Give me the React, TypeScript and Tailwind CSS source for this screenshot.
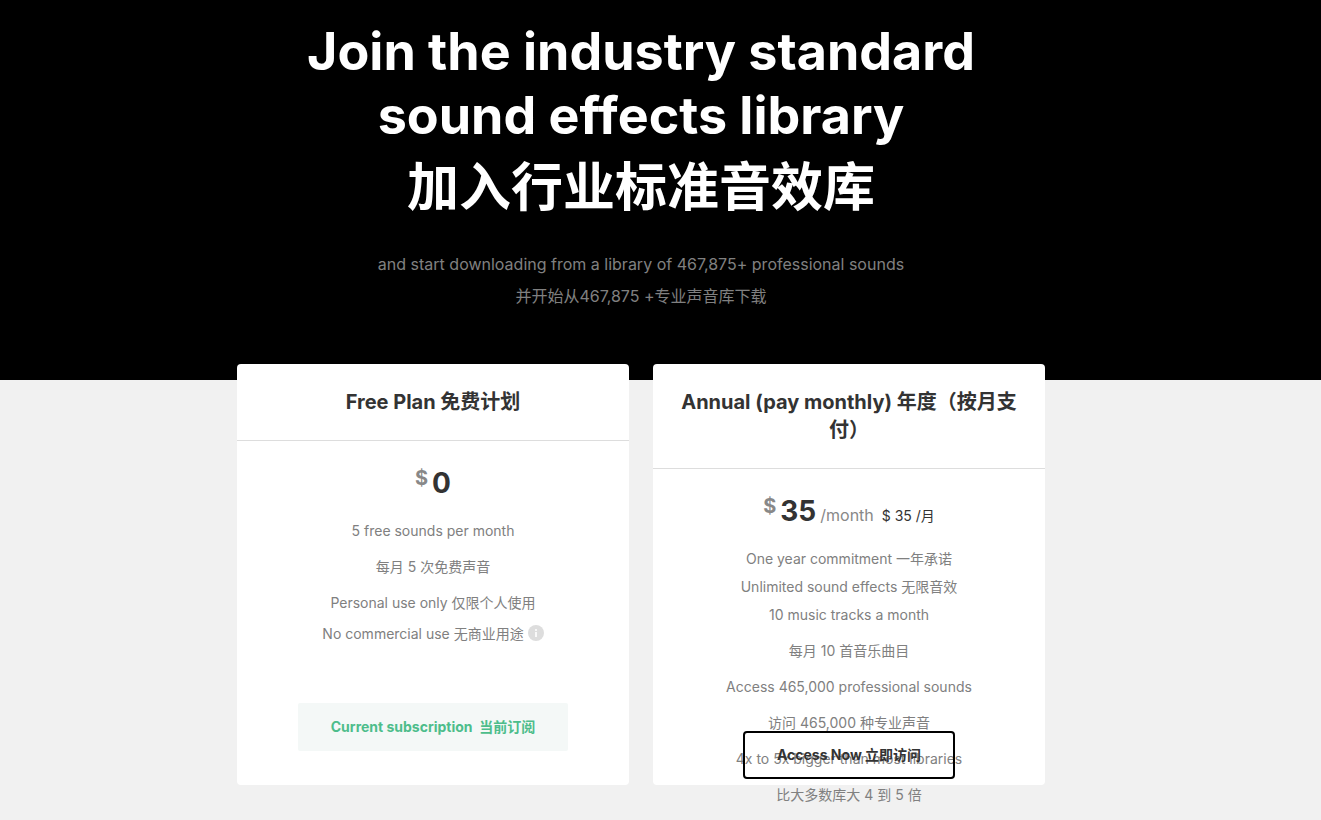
import type { ReactNode } from 'react'

type Plan = {
  id: string
  title: string
  price: string
  period?: string
  periodZh?: string
  features: { text: string; spaced?: boolean; info?: boolean }[]
  action: ReactNode
}

const plans: Plan[] = [
  {
    id: 'free',
    title: 'Free Plan 免费计划',
    price: '0',
    features: [
      { text: '5 free sounds per month' },
      { text: '每月 5 次免费声音', spaced: true },
      { text: 'Personal use only 仅限个人使用' },
      { text: 'No commercial use 无商业用途', info: true },
    ],
    action: (
      <div className="absolute inset-x-0 bottom-[34px] flex justify-center">
        <button type="button" className="h-12 w-[270px] rounded-[2px] bg-[#f4f8f7] text-sm font-bold text-[#4dbd8b]">
          Current subscription&nbsp; 当前订阅
        </button>
      </div>
    ),
  },
  {
    id: 'annual',
    title: 'Annual (pay monthly) 年度（按月支付）',
    price: '35',
    period: '/month',
    periodZh: '$ 35 /月',
    features: [
      { text: 'One year commitment 一年承诺' },
      { text: 'Unlimited sound effects 无限音效' },
      { text: '10 music tracks a month' },
      { text: '每月 10 首音乐曲目', spaced: true },
      { text: 'Access 465,000 professional sounds' },
      { text: '访问 465,000 种专业声音', spaced: true },
      { text: '4x to 5x bigger than most libraries' },
      { text: '比大多数库大 4 到 5 倍', spaced: true },
    ],
    action: (
      <div className="absolute inset-x-0 bottom-1.5 flex justify-center">
        <button type="button" className="h-12 w-[212px] rounded border-2 border-black text-sm font-bold text-[#333]">
          Access Now 立即访问
        </button>
      </div>
    ),
  },
]

function InfoIcon() {
  return (
    <svg viewBox="0 0 16 16" className="mb-1 inline-block h-4 w-4" aria-hidden="true">
      <circle cx="8" cy="8" r="8" fill="#ddd" />
      <circle cx="8" cy="5" r="1" fill="#fff" />
      <rect x="7.2" y="7" width="1.6" height="5" fill="#fff" />
    </svg>
  )
}

function PlanCard({ plan }: { plan: Plan }) {
  return (
    <article className="relative h-[421px] min-w-0 flex-1 rounded bg-white text-center">
      <h2 className="border-b border-[#ddd] p-6 text-xl leading-7 font-bold text-[#333]">{plan.title}</h2>
      <p className="mt-6 flex h-9 items-baseline justify-center gap-1 text-[#333]">
        <span className="relative -top-2 text-xl leading-9 font-bold text-[#888]">$</span>
        <span className="text-[28px] leading-9 font-bold">{plan.price}</span>
        {plan.period && <span className="text-base leading-9 text-[#888]">{plan.period}</span>}
        {plan.periodZh && <span className="ml-1 text-sm leading-9">{plan.periodZh}</span>}
      </p>
      <ul className="mt-4 text-sm leading-7 text-[#808080]">
        {plan.features.map((f) => (
          <li key={f.text} className={f.spaced ? 'my-2' : f.info ? 'mt-[3px]' : ''}>
            {f.text} {f.info && <InfoIcon />}
          </li>
        ))}
      </ul>
      {plan.action}
    </article>
  )
}

export default function App() {
  return (
    <div className="min-h-screen overflow-hidden bg-[#f1f1f1] font-[Inter,'Noto_Sans_CJK_SC',sans-serif] [font-variant-ligatures:none]">
      <header className="bg-black pt-5 pr-[39px] pb-[68px] text-center">
        <h1 className="text-[52px] leading-16 font-bold text-white">
          Join the industry standard
          <br />
          sound effects library
          <span className="mt-2 block">加入行业标准音效库</span>
        </h1>
        <p className="mt-7 text-base leading-8 text-[#808080]">
          and start downloading from a library of 467,875+ professional sounds
          <br />
          并开始从467,875 +专业声音库下载
        </p>
      </header>

      <main className="-mt-4 pr-[39px]">
        <div className="mx-auto flex max-w-[808px] items-start gap-6">
          {plans.map((plan) => (
            <PlanCard key={plan.id} plan={plan} />
          ))}
        </div>
      </main>
    </div>
  )
}
